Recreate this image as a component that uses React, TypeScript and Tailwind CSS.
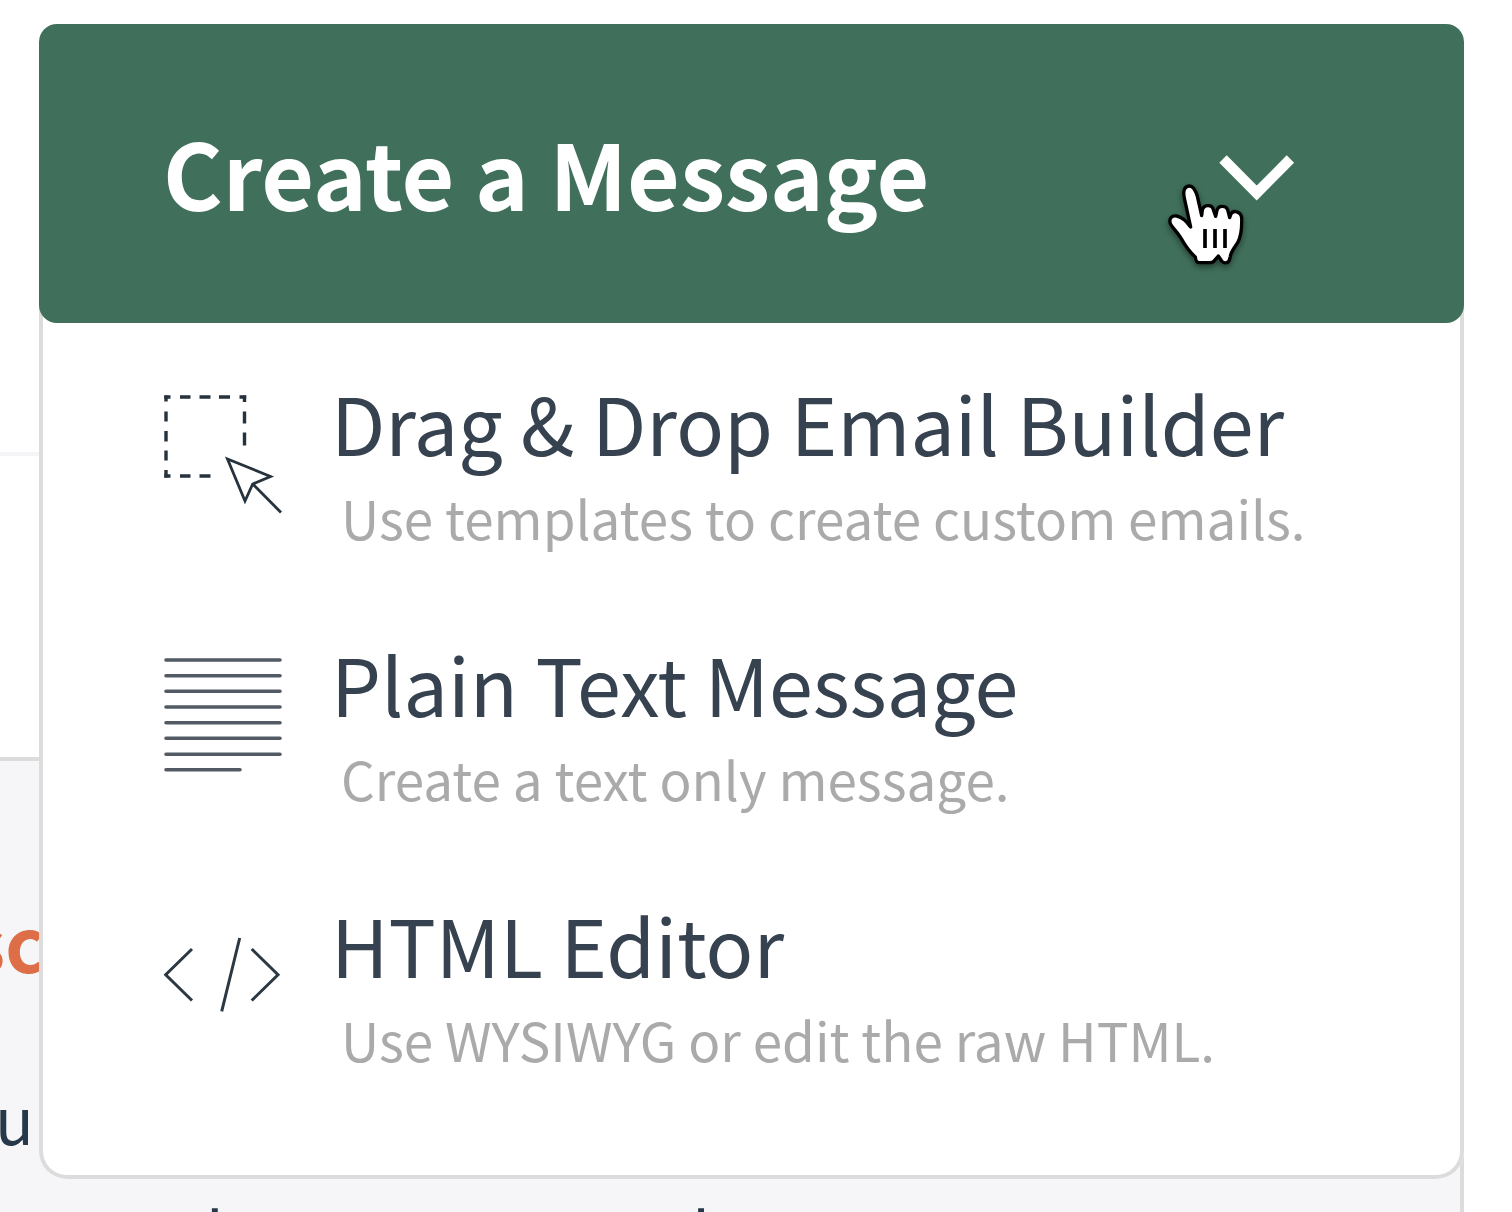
import React from "react";

type MenuItem = {
    title: string;
    description: string;
    icon: React.JSX.Element;
};

const DragIcon = (): React.JSX.Element => (
    <svg className="w-[120px] h-[120px]" viewBox="0 0 120 120" fill="none" stroke="#26323c" aria-hidden="true">
        <g strokeWidth="3.4">
            <path d="M1.3 2H7.5M17 2H27.5M36.5 2H47.5M56 2H67M76.5 2H83.2" />
            <path d="M3 .5V6.5M3 16.5V26.5M3 36V46.5M3 55.5V65.5M3 75V82.5" />
            <path d="M81.5 .5V7M81.5 16.5V28.5M81.5 37.5V50.5" />
            <path d="M1.3 81H7.5M17 81H27.5M36.5 81H47.5" />
        </g>
        <path strokeWidth="2.8" d="M64.5 64L107.5 81.5L89.7 89L82 106ZM89.7 89L118 117.5" />
    </svg>
);

const TextLinesIcon = (): React.JSX.Element => (
    <svg className="w-[120px] h-[120px]" viewBox="0 0 120 120" fill="none" stroke="#525a64" aria-hidden="true">
        <path
            strokeWidth="3.6"
            strokeLinecap="round"
            d="M3 4H117M3 19.7H117M3 35.3H117M3 51H117M3 66.7H117M3 82.3H117M3 98.3H117M3 113.8H77"
        />
    </svg>
);

const CodeIcon = (): React.JSX.Element => (
    <svg className="w-[120px] h-[120px]" viewBox="0 0 120 120" fill="none" stroke="#2c3842" aria-hidden="true">
        <path
            strokeWidth="3"
            d="M29 32L2.7 57.7L29 83.5M76.7 21L58.7 94.3M88.7 32L115 57.7L88.7 83.5"
        />
    </svg>
);

const ChevronIcon = (): React.JSX.Element => (
    <svg className="mt-3 w-[76px] h-[48px]" viewBox="0 0 76 48" fill="none" stroke="white" aria-hidden="true">
        <path strokeWidth="10.4" d="M4 5L37.7 39L71.4 5" />
    </svg>
);

const HandCursor = (): React.JSX.Element => (
    <svg
        className="absolute right-[217px] top-[158px] w-[80px] h-[85px] overflow-visible drop-shadow-[0_3px_3px_rgba(0,0,0,0.45)]"
        viewBox="110 155 240 255"
        aria-hidden="true"
    >
        <path
            fill="white"
            stroke="black"
            strokeWidth="10"
            strokeLinejoin="round"
            d="M181 290L163 208C157 184 161 168 176 167C190 166 196 181 201 198L214 256L216 240C219 222 245 221 249 238L256 258L260 240C264 224 289 224 293 242L298 262L302 251C309 238 331 243 334 262C335 290 334 314 322 337C312 352 302 364 300 378L296 392C291 400 280 399 274 392L264 377L252 391C248 396 242 397 236 397L208 397C198 397 196 391 195 380C178 366 164 345 151 322C142 306 127 293 120 280C115 264 124 255 139 257C157 260 168 274 181 290Z"
        />
        <path fill="none" stroke="black" strokeWidth="11" d="M224 296V353M254 296V353M284 296V353" />
    </svg>
);

const items: MenuItem[] = [
    {
        title: "Drag & Drop Email Builder",
        description: "Use templates to create custom emails.",
        icon: <DragIcon />,
    },
    {
        title: "Plain Text Message",
        description: "Create a text only message.",
        icon: <TextLinesIcon />,
    },
    {
        title: "HTML Editor",
        description: "Use WYSIWYG or edit the raw HTML.",
        icon: <CodeIcon />,
    },
];

const PageBehind = (): React.JSX.Element => (
    <div className="[grid-area:1/1] flex flex-col min-w-0 mr-12 overflow-hidden whitespace-nowrap">
        <div className="h-[456px] shrink-0 border-b-4 border-[#f5f5f7]" />
        <div className="h-[301px] shrink-0" />
        <div className="grow border-t-4 border-r-4 border-[#dcdcdc] bg-[#f6f6f8] pt-[120px] text-[64px] leading-[100px] text-[#26384a]">
            <p className="-ml-[32px] text-[75px] leading-[120px] font-bold text-[#dd6e48]">sc</p>
            <p className="mt-[66px] -ml-[5px]">u</p>
            <p className="mt-[14px] flex gap-[468px] pl-[206px]">
                <span>l</span>
                <span>l</span>
            </p>
        </div>
    </div>
);

const MessageMenu = (): React.JSX.Element => (
    <div className="[grid-area:1/1] z-10 self-start min-w-0 mt-6 ml-[39px] mr-12 rounded-[28px] bg-white">
        <button
            type="button"
            aria-expanded="true"
            className="relative z-10 flex w-full items-center justify-between rounded-[18px] bg-[#40705b] pt-[94px] pb-[98px] pl-[124px] pr-[169px] text-left text-[91px] leading-[107px] font-bold text-white cursor-pointer"
        >
            <span>Create a Message</span>
            <ChevronIcon />
            <HandCursor />
        </button>
        <ul className="-mt-7 flex flex-col gap-[71px] rounded-b-[28px] border-4 border-t-0 border-[#dcdcdc] pt-[71px] pb-[97px] pl-[120px]">
            {items.map((item) => (
                <li key={item.title}>
                    <button type="button" className="flex w-full items-start gap-12 text-left whitespace-nowrap cursor-pointer">
                        <span className="mt-[29px] shrink-0">{item.icon}</span>
                        <span className="flex flex-col">
                            <span className="text-[79px] leading-[112px] text-[#36424f]">{item.title}</span>
                            <span className="pl-[10px] text-[53px] leading-[78px] text-[#aaaaaa]">
                                {item.description}
                            </span>
                        </span>
                    </button>
                </li>
            ))}
        </ul>
    </div>
);

export default function App(): React.JSX.Element {
    return (
        <main className="grid h-screen overflow-hidden bg-white font-['Noto_Sans_CJK_SC',sans-serif]">
            <PageBehind />
            <MessageMenu />
        </main>
    );
}
